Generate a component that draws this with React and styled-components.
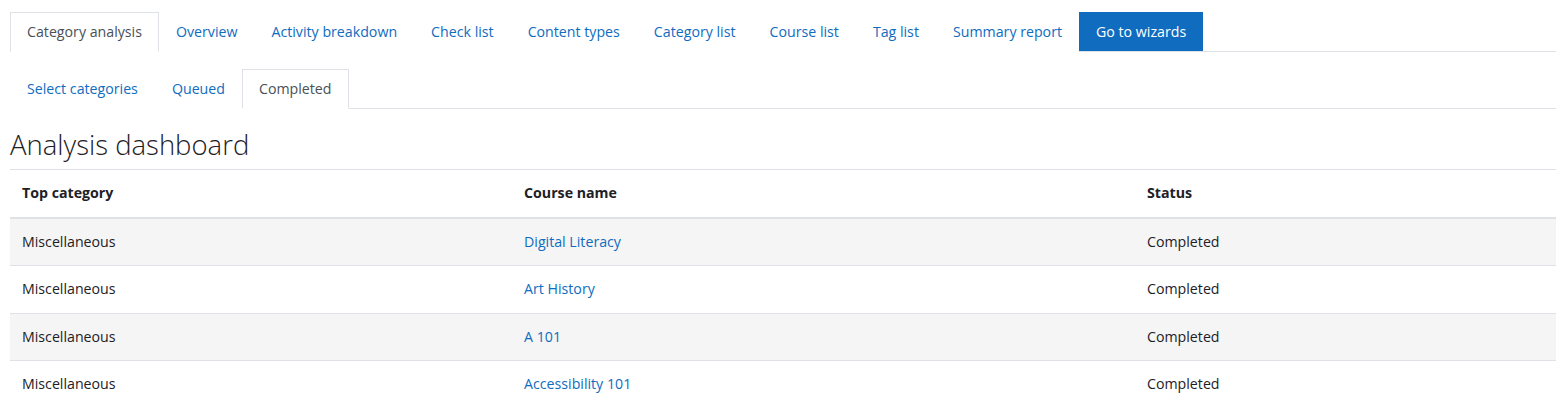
import React from "react";
import styled, { createGlobalStyle } from "styled-components";

const GlobalStyle = createGlobalStyle`
  body {
    margin: 0;
    background: #fff;
    font-family: "Open Sans", "Noto Sans", sans-serif;
    font-size: 14.2px;
    color: #1d2125;
  }
`;

const Page = styled.div`
  padding: 12px 9px 0 10px;
`;

const Tabs = styled.div`
  display: flex;
  align-items: flex-end;
  border-bottom: 1px solid #dee2e6;
  margin-top: ${props => props.mt || 0}px;
`;

const Tab = styled.a`
  display: block;
  padding: 8px 16px;
  line-height: 22px;
  border: 1px solid ${props => (props.active ? "#dee2e6" : "transparent")};
  border-bottom-color: ${props => (props.active ? "#fff" : "transparent")};
  margin-bottom: -1px;
  background: #fff;
  color: ${props => (props.active ? "#495057" : "#0f6cbf")};
  white-space: nowrap;
  cursor: pointer;
`;

const WizardButton = styled.button`
  font: inherit;
  line-height: 23px;
  padding: 8px 17px;
  border: 0;
  background: #0f6cbf;
  color: #fff;
  white-space: nowrap;
`;

const Heading = styled.h2`
  margin: 19px 0 7px;
  font-size: 27.5px;
  font-weight: 300;
  line-height: 34px;
  color: #1d2125;
`;

const Table = styled.table`
  width: 100%;
  border-collapse: collapse;
  table-layout: fixed;
`;

const Th = styled.th`
  text-align: left;
  font-weight: 700;
  padding: 12px;
  line-height: 22.5px;
  border-top: 1px solid #dee2e6;
  border-bottom: 2px solid #dee2e6;
  width: ${props => props.w || "auto"};
`;

const Row = styled.tr`
  background: ${props => (props.striped ? "#f5f5f5" : "#fff")};
`;

const Td = styled.td`
  padding: 12px;
  line-height: 22.5px;
  border-bottom: 1px solid #dee2e6;
`;

const Link = styled.a`
  color: #0f6cbf;
  text-decoration: none;
`;

const mainTabs = [
  "Category analysis",
  "Overview",
  "Activity breakdown",
  "Check list",
  "Content types",
  "Category list",
  "Course list",
  "Tag list",
  "Summary report"
];

const subTabs = ["Select categories", "Queued", "Completed"];

const rows = [
  { cat: "Miscellaneous", course: "Digital Literacy", status: "Completed" },
  { cat: "Miscellaneous", course: "Art History", status: "Completed" },
  { cat: "Miscellaneous", course: "A 101", status: "Completed" },
  { cat: "Miscellaneous", course: "Accessibility 101", status: "Completed" }
];

export default function App() {
  return (
    <Page>
      <GlobalStyle />
      <Tabs>
        {mainTabs.map((t, i) => (
          <Tab key={t} active={i === 0}>
            {t}
          </Tab>
        ))}
        <WizardButton>Go to wizards</WizardButton>
      </Tabs>
      <Tabs mt={17}>
        {subTabs.map((t, i) => (
          <Tab key={t} active={i === 2}>
            {t}
          </Tab>
        ))}
      </Tabs>
      <Heading>Analysis dashboard</Heading>
      <Table>
        <thead>
          <tr>
            <Th w="478px">Top category</Th>
            <Th w="599px">Course name</Th>
            <Th>Status</Th>
          </tr>
        </thead>
        <tbody>
          {rows.map((r, i) => (
            <Row key={r.course} striped={i % 2 === 0}>
              <Td>{r.cat}</Td>
              <Td>
                <Link>{r.course}</Link>
              </Td>
              <Td>{r.status}</Td>
            </Row>
          ))}
        </tbody>
      </Table>
    </Page>
  );
}
